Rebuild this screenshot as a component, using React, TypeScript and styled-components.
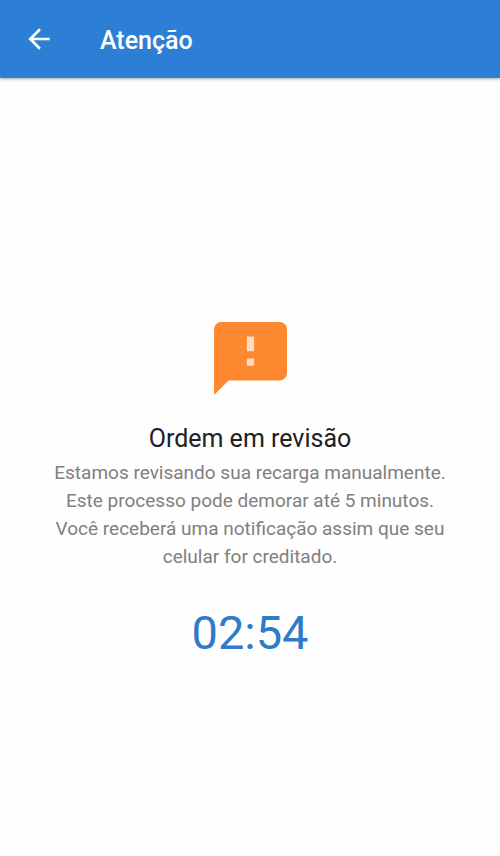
import React from "react";
import styled, { createGlobalStyle } from "styled-components";

const GlobalStyle = createGlobalStyle`
  * { box-sizing: border-box; }
  body {
    margin: 0;
    background: #fefefe;
    font-family: Roboto, "Noto Sans", sans-serif;
  }
`;

const Screen = styled.div`
  display: flex;
  flex-direction: column;
  min-height: 100vh;
`;

const AppBar = styled.header`
  display: flex;
  align-items: flex-start;
  gap: 49px;
  padding: 27px 27px 23px;
  background: #2d7fd6;
  box-shadow: 0 1px 3px rgba(0, 0, 0, 0.35);
`;

const BackButton = styled.button`
  display: flex;
  padding: 0;
  border: 0;
  background: none;
  color: #fff;
  cursor: pointer;
`;

const BarTitle = styled.h1`
  margin: 0;
  font-size: 25px;
  line-height: 28px;
  font-weight: 500;
  color: #fff;
`;

const Content = styled.main`
  flex: 1;
  display: flex;
  flex-direction: column;
  align-items: center;
  justify-content: center;
  padding: 68px 40px 20px;
  text-align: center;
`;

const Heading = styled.h2`
  margin: 28px 0 4px;
  font-size: 25px;
  line-height: 32px;
  font-weight: 400;
  color: #212121;
`;

const Message = styled.p`
  max-width: 400px;
  margin: 0;
  font-size: 19px;
  line-height: 28px;
  color: #808080;
`;

const Countdown = styled.time`
  margin-top: 34px;
  font-size: 47px;
  line-height: 56px;
  color: #2f7bc9;
`;

export default function App() {
  return (
    <Screen>
      <GlobalStyle />
      <AppBar>
        <BackButton type="button" aria-label="Voltar">
          <svg width="24" height="24" viewBox="3 3 18 18" fill="currentColor" aria-hidden="true">
            <path d="M20 11H7.83l5.59-5.59L12 4l-8 8 8 8 1.41-1.41L7.83 13H20v-2z" />
          </svg>
        </BackButton>
        <BarTitle>Atenção</BarTitle>
      </AppBar>
      <Content>
        <svg width="73" height="73" viewBox="2 2 20 20" aria-hidden="true">
          <path fill="#fddcc0" d="M10 5h4v10h-4z" />
          <path
            fill="#fe882f"
            d="M20 2H4c-1.1 0-1.99.9-1.99 2L2 22l4-4h14c1.1 0 2-.9 2-2V4c0-1.1-.9-2-2-2zm-7 12h-2v-2h2v2zm0-4h-2V6h2v4z"
          />
        </svg>
        <Heading>Ordem em revisão</Heading>
        <Message>
          Estamos revisando sua recarga manualmente. Este processo pode demorar até 5 minutos. Você
          receberá uma notificação assim que seu celular for creditado.
        </Message>
        <Countdown dateTime="PT2M54S">02:54</Countdown>
      </Content>
    </Screen>
  );
}
